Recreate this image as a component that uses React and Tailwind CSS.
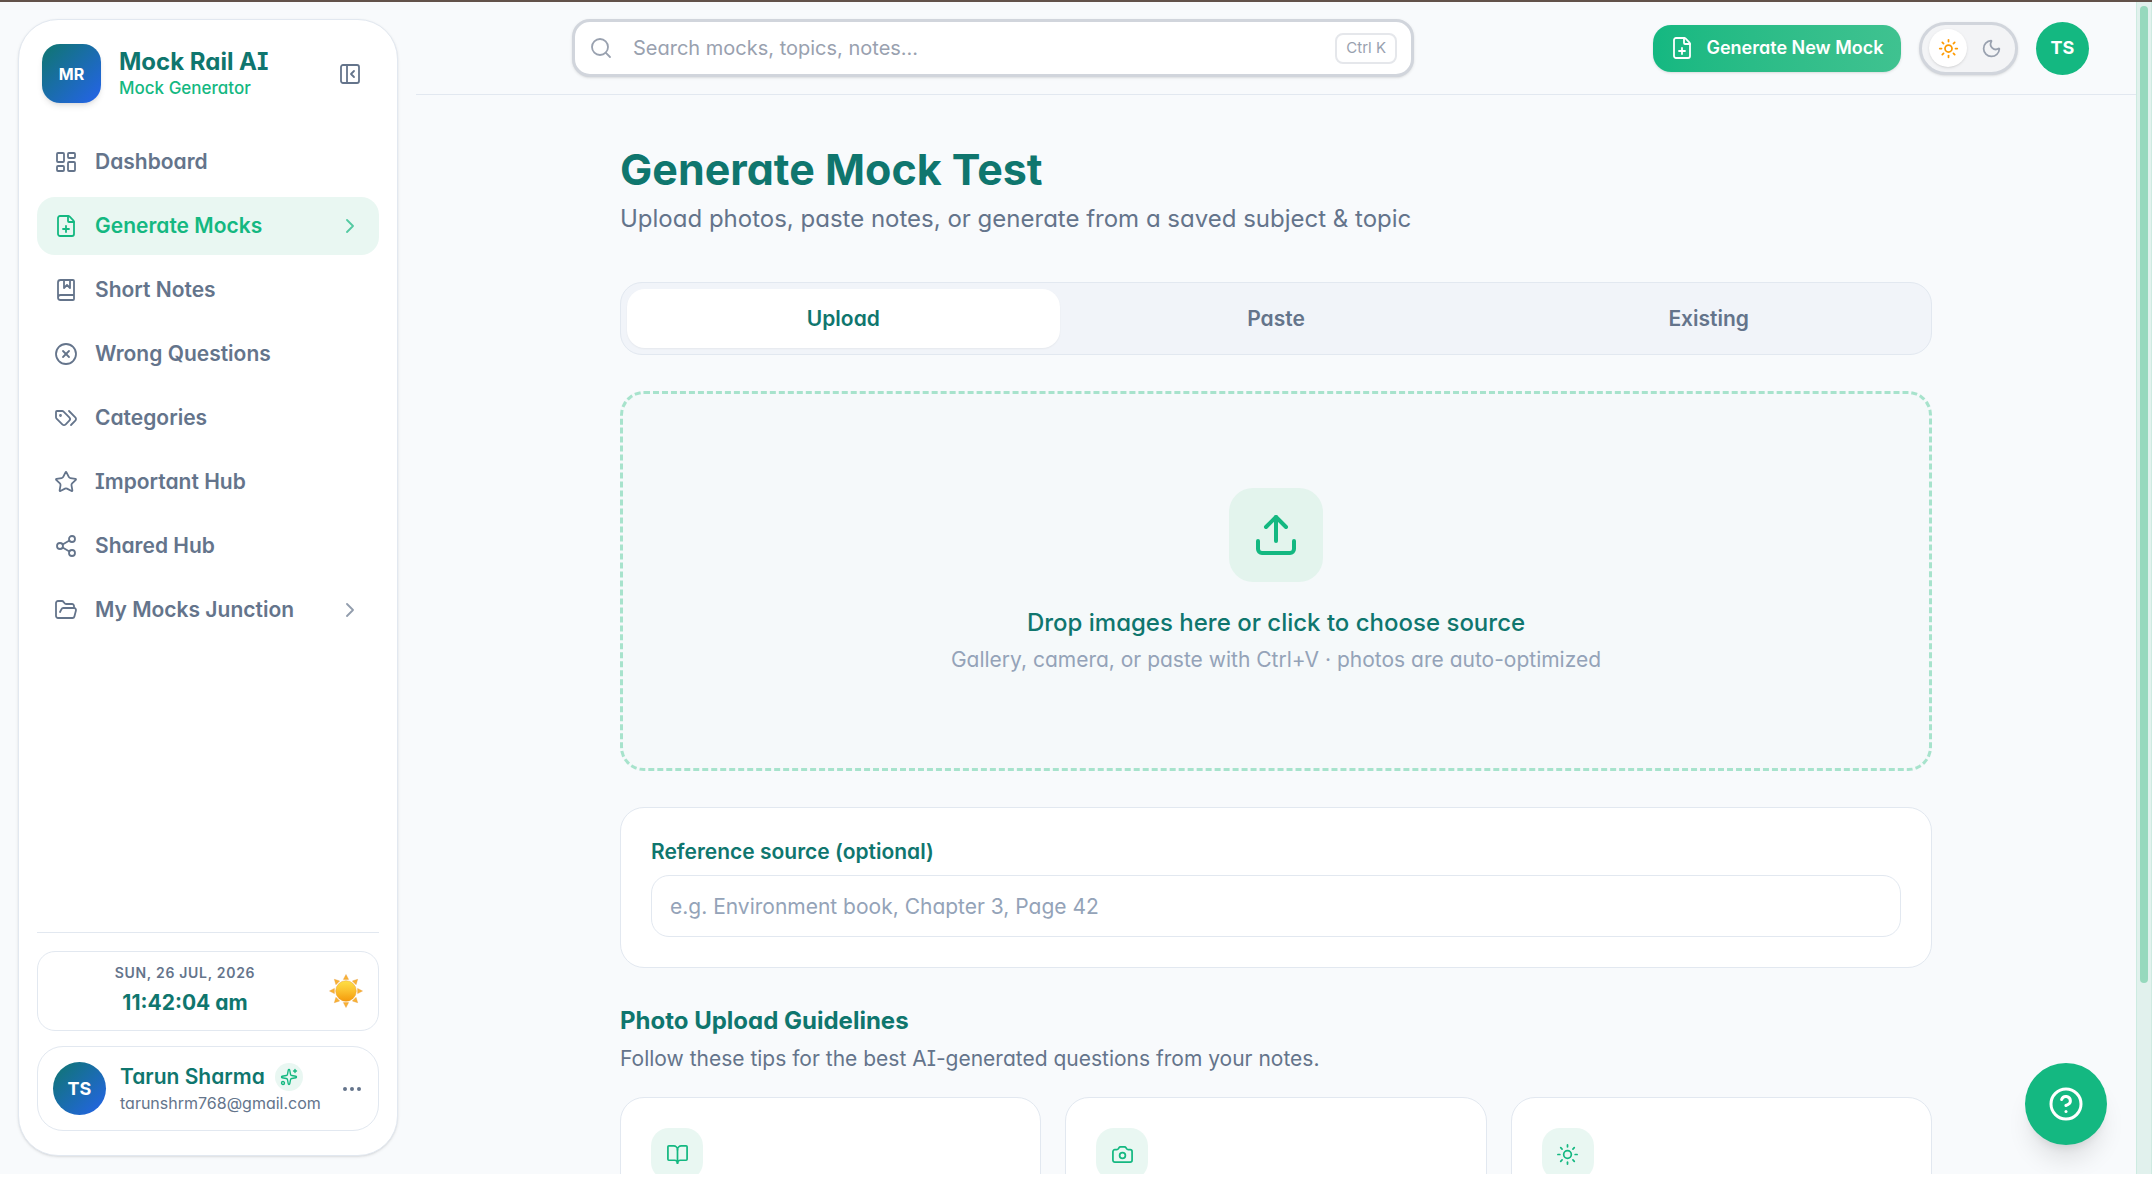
import React, { useState } from "react";
import {
  BookMarked,
  BookOpen,
  Camera,
  ChevronRight,
  CircleQuestionMark,
  CircleX,
  Ellipsis,
  FilePlus,
  FolderOpen,
  LayoutDashboard,
  Moon,
  PanelLeftClose,
  Search,
  Share2,
  Sparkles,
  Star,
  Sun,
  Upload,
} from "lucide-react";

// flat, sideways version of the tags icon
function TagsIcon({ size = 24, strokeWidth = 2, className }) {
  return (
    <svg
      width={size}
      height={size}
      viewBox="0 0 24 24"
      fill="none"
      stroke="currentColor"
      strokeWidth={strokeWidth}
      strokeLinecap="round"
      strokeLinejoin="round"
      className={className}
      aria-hidden="true"
    >
      <path d="m15 5 6.3 6.3a2.4 2.4 0 0 1 0 3.4L17 19" />
      <path d="M9.586 5.586A2 2 0 0 0 8.172 5H3a1 1 0 0 0-1 1v5.172a2 2 0 0 0 .586 1.414L8.29 18.29a2.426 2.426 0 0 0 3.42 0l3.58-3.58a2.426 2.426 0 0 0 0-3.42z" />
      <circle cx="6.5" cy="9.5" r=".5" fill="currentColor" />
    </svg>
  );
}

const navItems = [
  { label: "Dashboard", icon: LayoutDashboard },
  { label: "Generate Mocks", icon: FilePlus, active: true, arrow: true },
  { label: "Short Notes", icon: BookMarked },
  { label: "Wrong Questions", icon: CircleX },
  { label: "Categories", icon: TagsIcon },
  { label: "Important Hub", icon: Star },
  { label: "Shared Hub", icon: Share2 },
  { label: "My Mocks Junction", icon: FolderOpen, arrow: true },
];

const tabs = ["Upload", "Paste", "Existing"];

const guidelineIcons = [BookOpen, Camera, Sun];

const rays = [0, 45, 90, 135, 180, 225, 270, 315];

function WeatherSun() {
  return (
    <svg viewBox="0 0 34 34" className="size-[34px] shrink-0" aria-hidden="true">
      <defs>
        <linearGradient id="sunFill" x1="0" y1="0" x2="0" y2="1">
          <stop offset="0" stopColor="#fde047" />
          <stop offset="0.5" stopColor="#fbc02d" />
          <stop offset="1" stopColor="#f59a0b" />
        </linearGradient>
      </defs>
      {rays.map((deg) => (
        <path
          key={deg}
          d="M17 0.5 L19.6 5.4 L14.4 5.4 Z"
          fill="#f9b233"
          stroke="#e59a3a"
          strokeWidth="0.4"
          transform={`rotate(${deg} 17 17)`}
        />
      ))}
      <circle cx="17" cy="17" r="10.3" fill="url(#sunFill)" stroke="#eda02c" strokeWidth="0.5" />
    </svg>
  );
}

function Sidebar() {
  return (
    <aside className="m-[18px] mt-[17px] flex w-[380px] shrink-0 flex-col rounded-[40px] border border-[#e2e8f0] bg-white px-[18px] pt-6 pb-6 shadow-sm">
      <div className="flex items-center pr-[17px] pl-[5px]">
        <div className="flex size-[59px] items-center justify-center rounded-[18px] bg-linear-to-br/srgb from-[#0f766e] to-[#2563eb] text-base font-bold text-white shadow-md">
          MR
        </div>
        <div className="ml-[18px] flex-1">
          <div className="text-2xl leading-7 font-bold text-[#0f766e]">Mock Rail AI</div>
          <div className="text-[17px] leading-6 font-medium text-[#14b881]">Mock Generator</div>
        </div>
        <button type="button" aria-label="Collapse sidebar" className="text-[#64748b]">
          <PanelLeftClose size={24} strokeWidth={1.8} />
        </button>
      </div>

      <nav className="mt-[30px] flex flex-col gap-[6px]">
        {navItems.map(({ label, icon: Icon, active, arrow }) => (
          <a
            key={label}
            href="#"
            className={`flex h-[58px] items-center rounded-[18px] px-[17px] text-[21px] font-semibold ${
              active ? "bg-[#e9f7f2] text-[#14b881]" : "text-[#64748b]"
            }`}
          >
            <Icon size={24} strokeWidth={1.8} className="shrink-0" />
            <span className="ml-[17px] flex-1">{label}</span>
            {arrow && <ChevronRight size={24} strokeWidth={1.8} className="opacity-70" />}
          </a>
        ))}
      </nav>

      <div className="mt-auto border-t border-[#e2e8f0] pt-[18px]">
        <div className="flex h-20 items-center gap-3 rounded-[18px] border border-[#e2e8f0] pr-[15px] pl-[15px]">
          <div className="flex-1 text-center">
            <div className="text-sm leading-5 font-semibold tracking-wider text-[#64748b] uppercase">
              Sun, 26 Jul, 2026
            </div>
            <div className="mt-1 text-[21px] leading-8 font-bold text-[#0f766e]">11:42:04 am</div>
          </div>
          <WeatherSun />
        </div>

        <div className="mt-[15px] flex h-[85px] items-center rounded-[26px] border border-[#e2e8f0] pr-[14px] pl-[15px]">
          <div className="flex size-[53px] shrink-0 items-center justify-center rounded-full bg-linear-to-br/srgb from-[#0f766e] to-[#2563eb] text-lg font-bold text-white">
            TS
          </div>
          <div className="ml-[14px] flex-1">
            <div className="flex items-center gap-[10px]">
              <span className="text-[21px] leading-7 font-semibold text-[#0f766e]">Tarun Sharma</span>
              <span className="flex size-7 items-center justify-center rounded-full bg-[#e9f7f2] text-[#14b881]">
                <Sparkles size={18} strokeWidth={1.8} />
              </span>
            </div>
            <div className="text-base leading-6 text-[#64748b]">tarunshrm768@gmail.com</div>
          </div>
          <button type="button" aria-label="Account menu" className="text-[#64748b]">
            <Ellipsis size={24} />
          </button>
        </div>
      </div>
    </aside>
  );
}

function Header() {
  return (
    <header className="flex h-[93px] shrink-0 items-center border-b border-[#e2e8f0] px-[47px]">
      <div className="mr-[130px] flex flex-1 justify-center">
        <div className="flex h-[58px] w-full max-w-[842px] items-center rounded-[18px] border-[3px] border-gray-300 bg-white pr-[14px] pl-[14px] shadow-sm">
          <Search size={24} strokeWidth={1.8} className="shrink-0 text-gray-400" />
          <input
            type="search"
            aria-label="Search"
            placeholder="Search mocks, topics, notes..."
            className="ml-5 min-w-0 flex-1 text-xl outline-none placeholder:text-gray-400"
          />
          <kbd className="flex h-[31px] items-center rounded-lg border-2 border-gray-200 px-[9px] font-[Inter] text-[15px] text-gray-400">
            Ctrl K
          </kbd>
        </div>
      </div>

      <button
        type="button"
        className="flex h-[47px] w-[248px] shrink-0 items-center justify-center gap-3 rounded-[18px] bg-linear-to-r from-[#14b881] to-[#3fc290] text-lg font-semibold whitespace-nowrap text-white shadow-sm"
      >
        <FilePlus size={24} strokeWidth={1.8} />
        Generate New Mock
      </button>
      <button
        type="button"
        aria-label="Toggle theme"
        className="ml-[18px] flex h-[53px] w-[99px] shrink-0 items-center rounded-full border-[3px] border-gray-300 bg-gray-100 pl-[7px] shadow-sm"
      >
        <span className="flex size-[38px] items-center justify-center rounded-full bg-white text-amber-500 shadow">
          <Sun size={21} />
        </span>
        <span className="flex flex-1 justify-center text-gray-400">
          <Moon size={21} />
        </span>
      </button>
      <button
        type="button"
        aria-label="Profile"
        className="ml-[18px] size-[53px] shrink-0 rounded-full bg-[#14b881] text-lg font-bold text-white"
      >
        TS
      </button>
    </header>
  );
}

export default function App() {
  const [tab, setTab] = useState("Upload");

  return (
    <div className="h-screen overflow-hidden bg-white pb-2 font-[Inter,sans-serif] [font-feature-settings:'cv08','cv11']">
      <div className="relative flex h-full overflow-hidden border-t-2 border-[#62524a] bg-[#f8fafc]">
        <Sidebar />

        <div className="flex min-w-0 flex-1 flex-col overflow-hidden">
          <Header />

          <main className="mx-auto w-full max-w-[1312px] flex-1">
            <h1 className="mt-[48px] text-[43px] leading-[52px] font-bold text-[#0f766e]">Generate Mock Test</h1>
            <p className="mt-2 text-2xl leading-8 text-[#64748b]">
              Upload photos, paste notes, or generate from a saved subject &amp; topic
            </p>

            <div
              role="tablist"
              className="mt-[47px] flex h-[73px] rounded-[22px] border border-[#e2e8f0] bg-[#f1f4f9] p-[6px]"
            >
              {tabs.map((name) => (
                <button
                  key={name}
                  type="button"
                  role="tab"
                  aria-selected={tab === name}
                  onClick={() => setTab(name)}
                  className={`flex-1 rounded-[18px] text-[21px] font-semibold ${
                    tab === name ? "bg-white text-[#0f766e] shadow-xs" : "text-[#64748b]"
                  }`}
                >
                  {name}
                </button>
              ))}
            </div>

            <button
              type="button"
              className="mt-9 flex h-[380px] w-full flex-col items-center rounded-[24px] border-[3px] border-dashed border-[#a7e3cc] bg-[#f5f9fa] pt-[94px]"
            >
              <span className="flex size-[94px] items-center justify-center rounded-[24px] bg-[#e3f4ed] text-[#14b881]">
                <Upload size={48} />
              </span>
              <span className="mt-[25px] text-2xl leading-8 font-medium text-[#0f766e]">
                Drop images here or click to choose source
              </span>
              <span className="mt-[7px] text-[21px] leading-7 text-[#94a3b8]">
                Gallery, camera, or paste with Ctrl+V · photos are auto-optimized
              </span>
            </button>

            <section className="mt-9 rounded-[24px] border border-[#e2e8f0] bg-white px-[30px] pt-[30px] pb-[30px]">
              <label htmlFor="source" className="block text-[21px] leading-7 font-semibold text-[#0f766e]">
                Reference source (optional)
              </label>
              <input
                id="source"
                type="text"
                placeholder="e.g. Environment book, Chapter 3, Page 42"
                className="mt-[9px] h-[62px] w-full rounded-[18px] border border-[#e2e8f0] px-[18px] text-[21px] outline-none placeholder:text-[#94a3b8]"
              />
            </section>

            <h2 className="mt-[37px] text-2xl leading-8 font-bold text-[#0f766e]">Photo Upload Guidelines</h2>
            <p className="mt-2 text-[21px] leading-7 text-[#64748b]">
              Follow these tips for the best AI-generated questions from your notes.
            </p>
            <div className="mt-6 grid grid-cols-3 gap-6">
              {guidelineIcons.map((Icon, i) => (
                <div key={i} className="h-60 rounded-[24px] border border-[#e2e8f0] bg-white p-[30px]">
                  <div className="flex size-[52px] items-center justify-center rounded-[18px] bg-[#e9f7f2] text-[#14b881]">
                    <Icon size={23} strokeWidth={1.8} />
                  </div>
                </div>
              ))}
            </div>
          </main>
        </div>

        {/* scroll track */}
        <div className="w-4 shrink-0 border-x border-[#cdebe1] bg-[#e1f1ed] px-[3px] pt-1">
          <div className="h-[977px] rounded-full bg-[#96d9bd]" />
        </div>

        <button
          type="button"
          aria-label="Help"
          className="absolute right-[45px] bottom-[29px] flex size-[82px] items-center justify-center rounded-full bg-[#14b881] text-white shadow-xl"
        >
          <CircleQuestionMark size={36} />
        </button>
      </div>
    </div>
  );
}
